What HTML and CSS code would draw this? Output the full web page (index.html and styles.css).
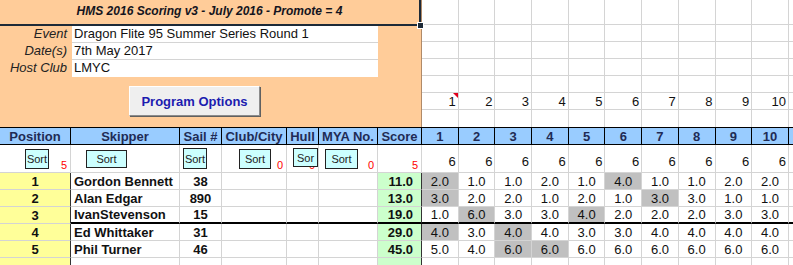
FILE: index.html
```html
<!DOCTYPE html>
<html lang="en">
<head>
    <meta charset="UTF-8">
    <meta name="viewport" content="width=device-width, initial-scale=1.0">
    <title>HMS 2016 Scoring</title>
    <link rel="stylesheet" href="styles.css">
</head>
<body>
<div class="sheet">
    <div class="panel">
        <div class="title">HMS 2016 Scoring v3 - July 2016 - Promote = 4<span class="handle"></span></div>
        <div class="fields">
            <div class="label">Event</div><div class="value">Dragon Flite 95 Summer Series Round 1</div>
            <div class="label">Date(s)</div><div class="value">7th May 2017</div>
            <div class="label">Host Club</div><div class="value last">LMYC</div>
        </div>
        <button class="options">Program Options</button>
    </div>

    <!-- empty grid to the right of the panel -->
    <div class="row"><div class="c"></div><div class="c"></div><div class="c"></div><div class="c"></div><div class="c"></div><div class="c"></div><div class="c"></div><div class="c"></div><div class="c"></div><div class="c"></div><div class="c"></div></div>
    <div class="row"><div class="c"></div><div class="c"></div><div class="c"></div><div class="c"></div><div class="c"></div><div class="c"></div><div class="c"></div><div class="c"></div><div class="c"></div><div class="c"></div><div class="c"></div></div>
    <div class="row"><div class="c"></div><div class="c"></div><div class="c"></div><div class="c"></div><div class="c"></div><div class="c"></div><div class="c"></div><div class="c"></div><div class="c"></div><div class="c"></div><div class="c"></div></div>
    <div class="row"><div class="c"></div><div class="c"></div><div class="c"></div><div class="c"></div><div class="c"></div><div class="c"></div><div class="c"></div><div class="c"></div><div class="c"></div><div class="c"></div><div class="c"></div></div>
    <div class="row"><div class="c"></div><div class="c"></div><div class="c"></div><div class="c"></div><div class="c"></div><div class="c"></div><div class="c"></div><div class="c"></div><div class="c"></div><div class="c"></div><div class="c"></div></div>
    <div class="row">
        <div class="c num note">1</div><div class="c num">2</div><div class="c num">3</div><div class="c num">4</div><div class="c num">5</div>
        <div class="c num">6</div><div class="c num">7</div><div class="c num">8</div><div class="c num">9</div><div class="c num">10</div><div class="c"></div>
    </div>
    <div class="row top-end"><div class="c"></div><div class="c"></div><div class="c"></div><div class="c"></div><div class="c"></div><div class="c"></div><div class="c"></div><div class="c"></div><div class="c"></div><div class="c"></div><div class="c"></div></div>

    <!-- column headings -->
    <div class="row head">
        <div class="c">Position</div><div class="c">Skipper</div><div class="c">Sail #</div><div class="c">Club/City</div>
        <div class="c">Hull</div><div class="c">MYA No.</div><div class="c">Score</div>
        <div class="c">1</div><div class="c">2</div><div class="c">3</div><div class="c">4</div><div class="c">5</div>
        <div class="c">6</div><div class="c">7</div><div class="c">8</div><div class="c">9</div><div class="c">10</div><div class="c"></div>
    </div>

    <!-- sort buttons -->
    <div class="row sorts">
        <div class="c"><span class="tally">5</span><button class="sort s-pos">Sort</button></div>
        <div class="c"><button class="sort s-skip">Sort</button></div>
        <div class="c"><button class="sort s-sail">Sort</button></div>
        <div class="c"><span class="tally">0</span><button class="sort s-club">Sort</button></div>
        <div class="c"><span class="tally">0</span><button class="sort s-hull">Sor</button></div>
        <div class="c"><span class="tally">0</span><button class="sort s-mya">Sort</button></div>
        <div class="c"><span class="tally">5</span></div>
        <div class="c n">6</div><div class="c n">6</div><div class="c n">6</div><div class="c n">6</div><div class="c n">6</div>
        <div class="c n">6</div><div class="c n">6</div><div class="c n">6</div><div class="c n">6</div><div class="c n">6</div><div class="c"></div>
    </div>

    <!-- results -->
    <div class="row">
        <div class="c pos">1</div><div class="c name">Gordon Bennett</div><div class="c sail">38</div><div class="c"></div><div class="c"></div><div class="c"></div><div class="c score">11.0</div>
        <div class="c pt drop">2.0</div><div class="c pt">1.0</div><div class="c pt">1.0</div><div class="c pt">2.0</div><div class="c pt">1.0</div>
        <div class="c pt drop">4.0</div><div class="c pt">1.0</div><div class="c pt">1.0</div><div class="c pt">2.0</div><div class="c pt">2.0</div><div class="c"></div>
    </div>
    <div class="row">
        <div class="c pos">2</div><div class="c name">Alan Edgar</div><div class="c sail">890</div><div class="c"></div><div class="c"></div><div class="c"></div><div class="c score">13.0</div>
        <div class="c pt drop">3.0</div><div class="c pt">2.0</div><div class="c pt">2.0</div><div class="c pt">1.0</div><div class="c pt">2.0</div>
        <div class="c pt">1.0</div><div class="c pt drop">3.0</div><div class="c pt">3.0</div><div class="c pt">1.0</div><div class="c pt">1.0</div><div class="c"></div>
    </div>
    <div class="row cut">
        <div class="c pos">3</div><div class="c name">Ivan<span class="thin"> </span>Stevenson</div><div class="c sail">15</div><div class="c"></div><div class="c"></div><div class="c"></div><div class="c score">19.0</div>
        <div class="c pt">1.0</div><div class="c pt drop">6.0</div><div class="c pt">3.0</div><div class="c pt">3.0</div><div class="c pt drop">4.0</div>
        <div class="c pt">2.0</div><div class="c pt">2.0</div><div class="c pt">2.0</div><div class="c pt">3.0</div><div class="c pt">3.0</div><div class="c"></div>
    </div>
    <div class="row">
        <div class="c pos">4</div><div class="c name">Ed Whittaker</div><div class="c sail">31</div><div class="c"></div><div class="c"></div><div class="c"></div><div class="c score">29.0</div>
        <div class="c pt drop">4.0</div><div class="c pt">3.0</div><div class="c pt drop">4.0</div><div class="c pt">4.0</div><div class="c pt">3.0</div>
        <div class="c pt">3.0</div><div class="c pt">4.0</div><div class="c pt">4.0</div><div class="c pt">4.0</div><div class="c pt">4.0</div><div class="c"></div>
    </div>
    <div class="row">
        <div class="c pos">5</div><div class="c name">Phil Turner</div><div class="c sail">46</div><div class="c"></div><div class="c"></div><div class="c"></div><div class="c score">45.0</div>
        <div class="c pt">5.0</div><div class="c pt">4.0</div><div class="c pt drop">6.0</div><div class="c pt drop">6.0</div><div class="c pt">6.0</div>
        <div class="c pt">6.0</div><div class="c pt">6.0</div><div class="c pt">6.0</div><div class="c pt">6.0</div><div class="c pt">6.0</div><div class="c"></div>
    </div>
    <div class="row">
        <div class="c pos"></div><div class="c"></div><div class="c"></div><div class="c"></div><div class="c"></div><div class="c"></div><div class="c score"></div>
        <div class="c"></div><div class="c"></div><div class="c"></div><div class="c"></div><div class="c"></div>
        <div class="c"></div><div class="c"></div><div class="c"></div><div class="c"></div><div class="c"></div><div class="c"></div>
    </div>
</div>
</body>
</html>
```

FILE: styles.css
```css
body {
    margin: 0;
    overflow: hidden;
    background: #fff;
    font-family: 'Liberation Sans', Arial, sans-serif;
    font-size: 13px;
    color: #111;
}

.sheet {
    display: grid;
    grid-template-columns: 71px 109px 42px 65px 32px 59px 44px repeat(10, 36.7px) 40px;
    grid-template-rows: 25px repeat(6, 17px) 18px 28px repeat(6, 17px);
    width: max-content;
}

.row {
    display: contents;
}

.c {
    box-sizing: border-box;
    border-right: 1px solid #d4d4d4;
    border-bottom: 1px solid #d4d4d4;
    display: flex;
    align-items: center;
    white-space: nowrap;
    overflow: hidden;
    line-height: 15px;
}

/* top panel */
.panel {
    grid-column: 1 / 8;
    grid-row: 1 / 8;
    background: #ffcc99;
    border-right: 1px solid #b08a68;
    display: flex;
    flex-direction: column;
    align-items: flex-start;
}

.title {
    position: relative;
    align-self: stretch;
    height: 26px;
    box-sizing: border-box;
    border-bottom: 2px solid #1d2a38;
    border-right: 2px solid #1d2a38;
    font-size: 12px;
    font-weight: bold;
    font-style: italic;
    text-align: center;
    line-height: 22px;
    color: #141420;
}

.handle {
    position: absolute;
    right: -5px;
    bottom: -5px;
    width: 5px;
    height: 5px;
    background: #1d2a38;
    border: 1px solid #fff;
}

.fields {
    display: grid;
    grid-template-columns: 72px 306px;
    grid-auto-rows: 17px;
}

.label {
    font-style: italic;
    text-align: right;
    padding-right: 5px;
    line-height: 16px;
    color: #222;
}

.value {
    background: #fff;
    padding-left: 2px;
    line-height: 16px;
    border-bottom: 1px solid #d4d4d4;
}

.value.last {
    border-bottom: 0;
}

.options {
    margin: 9px 0 0 129px;
    width: 131px;
    height: 30px;
    padding: 0;
    background: #efefef;
    border: 1px solid;
    border-color: #fff #8c8c8c #8c8c8c #fff;
    box-shadow: 1px 1px 0 #606060;
    font: bold 13px 'Liberation Sans', Arial, sans-serif;
    color: #1c1cb0;
}

/* race numbers over the grid */
.num {
    justify-content: flex-end;
    padding-right: 2px;
}

.note {
    position: relative;
}

.note::after {
    content: "";
    position: absolute;
    top: 0;
    right: 0;
    border-top: 5px solid #e0001b;
    border-left: 5px solid transparent;
}

.top-end .c {
    border-bottom: 0;
}

/* headings */
.head .c {
    background: #99ccff;
    border-top: 1px solid #000;
    border-right: 1px solid #000;
    border-bottom: 1px solid #000;
    justify-content: center;
    font-weight: bold;
    color: #1f2b55;
}

/* sort row */
.sorts .c {
    display: grid;
}

.sorts .c > * {
    grid-area: 1 / 1;
}

.sorts .n {
    display: flex;
    align-items: flex-end;
    justify-content: flex-end;
    padding: 0 2px 3px 0;
}

.sort {
    justify-self: start;
    align-self: start;
    box-sizing: border-box;
    padding: 0;
    background: #ccffff;
    border: 1px solid #222;
    font: 11px 'Liberation Sans', Arial, sans-serif;
    color: #222;
    overflow: hidden;
}

.s-pos { margin: 4px 0 0 25px; width: 24px; height: 20px; }
.s-skip { margin: 5px 0 0 15px; width: 41px; height: 18px; }
.s-sail { margin: 3px 0 0 3px; width: 24px; height: 21px; }
.s-club { margin: 4px 0 0 17px; width: 32px; height: 20px; }
.s-hull { margin: 3px 0 0 6px; width: 25px; height: 19px; }
.s-mya { margin: 4px 0 0 6px; width: 33px; height: 20px; }

.tally {
    justify-self: end;
    align-self: end;
    margin: 0 3px 2px 0;
    color: #f00;
    font-size: 11px;
    line-height: 9px;
}

/* results */
.pos {
    background: #ffff99;
    justify-content: center;
    font-weight: bold;
    border-right-color: #333;
}

.name {
    font-weight: bold;
    padding-left: 3px;
}

.thin {
    letter-spacing: -2px;
}

.sail {
    font-weight: bold;
    justify-content: center;
}

.score {
    background: #ccffcc;
    font-weight: bold;
    justify-content: flex-end;
    padding-right: 8px;
    border-right-color: #333;
}

.pt {
    justify-content: center;
}

.drop {
    background: #c0c0c0;
}

.cut .c:not(.pos) {
    border-bottom: 2px solid #000;
}
```
